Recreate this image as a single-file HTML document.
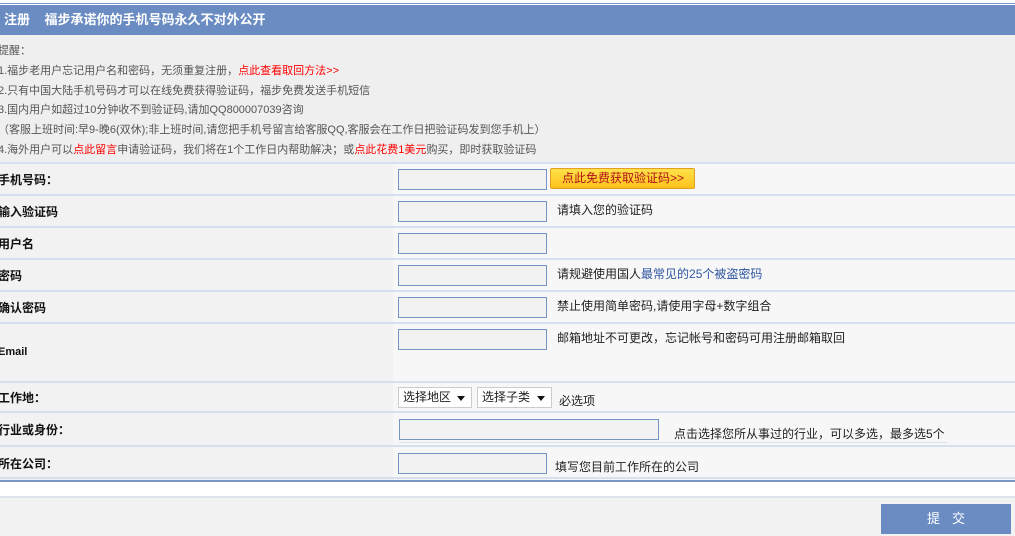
<!DOCTYPE html>
<html><head><meta charset="utf-8"><style>
*{margin:0;padding:0;box-sizing:border-box}
body{width:1015px;height:536px;overflow:hidden;background:#fff;font-family:"Liberation Sans","Noto Sans CJK SC",sans-serif;font-size:12px;color:#222;position:relative}
.a{position:absolute}
.topline{left:0;top:3px;width:1015px;height:1px;background:#7a96c8}
.hdr{left:0;top:5px;width:1015px;height:30px;background:#6a8cc3;color:#fff;font-weight:bold;font-size:13px;line-height:30px;padding-left:4px;white-space:pre}
.note{left:0;top:35px;width:1015px;height:128px;background:#efefef}
.note div{position:absolute;left:-2px;font-size:11px;color:#555;white-space:nowrap}
.red{color:#f00}
.lab{left:0;width:393px;background:#f2f2f2}
.val{left:393px;width:622px;background:#f7f7f7}
.sep{left:0;width:1015px;height:2px;background:#d7e0ee}
.lt{position:absolute;left:-2px;font-weight:bold;font-size:12px;color:#111}
.inp{position:absolute;width:149px;height:21px;border:1px solid #7693c6;background:#f2f2f2}
.tip{position:absolute;font-size:12px;color:#222;white-space:nowrap}
.sel{position:absolute;height:21px;border:1px solid #ccc;background:#fff;font-size:12px;line-height:19px;padding-left:4px}
.sel i{position:absolute;right:6px;top:8px;border-left:4px solid transparent;border-right:4px solid transparent;border-top:5px solid #111}
</style></head><body>
<div class="a topline"></div>
<div class="a hdr">注册    福步承诺你的手机号码永久不对外公开</div>
<div class="a note">
<div style="top:7px">提醒：</div>
<div style="top:27px">1.福步老用户忘记用户名和密码，无须重复注册，<span class="red">点此查看取回方法&gt;&gt;</span></div>
<div style="top:47px">2.只有中国大陆手机号码才可以在线免费获得验证码，福步免费发送手机短信</div>
<div style="top:66px">3.国内用户如超过10分钟收不到验证码,请加QQ800007039咨询</div>
<div style="top:86px">（客服上班时间:早9-晚6(双休);非上班时间,请您把手机号留言给客服QQ,客服会在工作日把验证码发到您手机上）</div>
<div style="top:106px">4.海外用户可以<span class="red">点此留言</span>申请验证码，我们将在1个工作日内帮助解决；或<span class="red">点此花费1美元</span>购买，即时获取验证码</div>
</div>
<div class="a lab" style="top:163px;height:317px"></div>
<div class="a val" style="top:163px;height:317px"></div>
<div class="a sep" style="top:162px"></div>
<div class="a sep" style="top:194px"></div>
<div class="a sep" style="top:226px"></div>
<div class="a sep" style="top:258px"></div>
<div class="a sep" style="top:290px"></div>
<div class="a sep" style="top:322px"></div>
<div class="a sep" style="top:381px"></div>
<div class="a sep" style="top:411px"></div>
<div class="a sep" style="top:445px"></div>
<div class="a sep" style="top:477px"></div>
<div class="a" style="left:0;top:480px;width:1015px;height:2px;background:#7a96c8"></div>
<div class="a" style="left:0;top:496px;width:1015px;height:2px;background:#dde2ea"></div>
<div class="a" style="left:0;top:498px;width:1015px;height:38px;background:#f2f2f2"></div>

<div class="lt" style="top:171px">手机号码：</div>
<div class="lt" style="top:203px">输入验证码</div>
<div class="lt" style="top:235px">用户名</div>
<div class="lt" style="top:267px">密码</div>
<div class="lt" style="top:299px">确认密码</div>
<div class="lt" style="top:346px;font-size:11px">Email</div>
<div class="lt" style="top:389px">工作地：</div>
<div class="lt" style="top:421px">行业或身份：</div>
<div class="lt" style="top:455px">所在公司：</div>

<div class="inp" style="left:398px;top:169px"></div>
<div class="a" style="left:550px;top:168px;width:145px;height:21px;border:1px solid #e3a020;border-radius:2px;background:linear-gradient(#ffe14a,#ffc21c);color:#b0121a;font-size:12px;line-height:19px;padding-left:11px">点此免费获取验证码&gt;&gt;</div>
<div class="inp" style="left:398px;top:201px"></div>
<div class="tip" style="left:557px;top:201px">请填入您的验证码</div>
<div class="inp" style="left:398px;top:233px"></div>
<div class="inp" style="left:398px;top:265px"></div>
<div class="tip" style="left:557px;top:265px">请规避使用国人<span style="color:#2e56a0">最常见的25个被盗密码</span></div>
<div class="inp" style="left:398px;top:297px"></div>
<div class="tip" style="left:557px;top:297px">禁止使用简单密码,请使用字母+数字组合</div>
<div class="inp" style="left:398px;top:329px"></div>
<div class="tip" style="left:557px;top:329px">邮箱地址不可更改，忘记帐号和密码可用注册邮箱取回</div>
<div class="sel" style="left:398px;top:387px;width:74px">选择地区<i></i></div>
<div class="sel" style="left:477px;top:387px;width:75px">选择子类<i></i></div>
<div class="tip" style="left:559px;top:392px">必选项</div>
<div class="inp" style="left:399px;top:419px;width:260px"></div>
<div class="a" style="left:399px;top:442px;width:548px;height:1px;background:#d7e0ee"></div>
<div class="tip" style="left:674px;top:425px">点击选择您所从事过的行业，可以多选，最多选5个</div>
<div class="inp" style="left:398px;top:453px"></div>
<div class="tip" style="left:555px;top:458px">填写您目前工作所在的公司</div>

<div class="a" style="left:881px;top:504px;width:130px;height:30px;background:#6a8cc3;color:#fff;font-size:13px;line-height:30px;text-align:center;letter-spacing:12px;padding-left:12px">提交</div>
</body></html>
